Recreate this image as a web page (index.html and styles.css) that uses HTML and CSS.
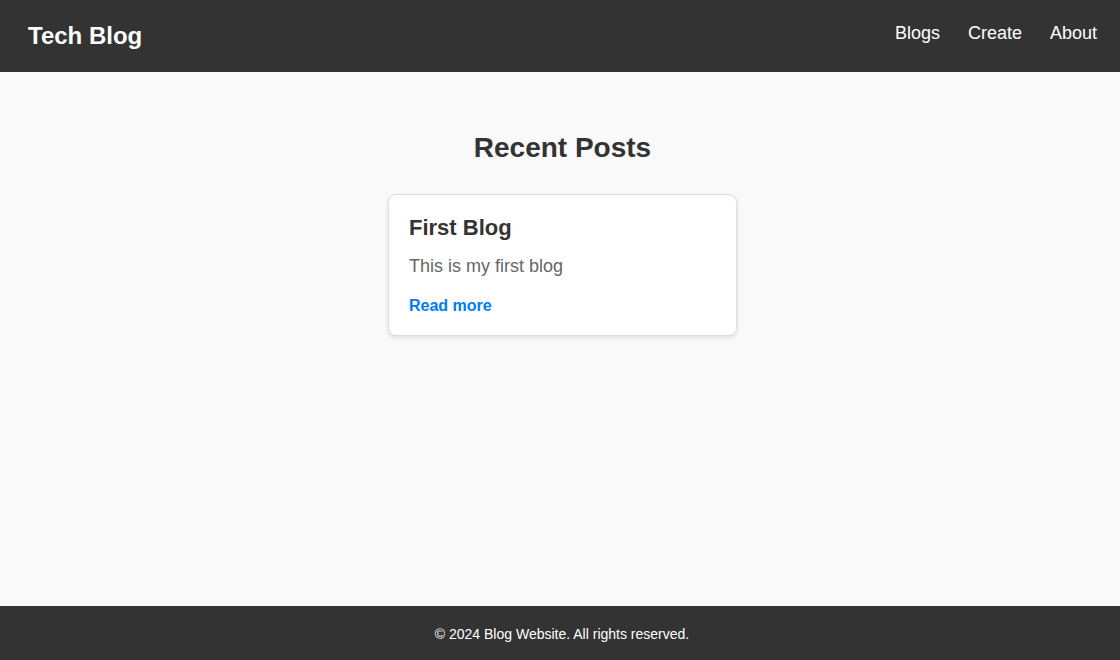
FILE: index.html
```html
<!DOCTYPE html>
<html lang="en">
<head>
<meta charset="utf-8">
<title>Tech Blog</title>
<link rel="stylesheet" href="styles.css">
</head>
<body>
  <header class="navbar">
    <h1 class="brand">Tech Blog</h1>
    <nav class="nav-links">
      <a href="#" class="nav-link">Blogs</a>
      <a href="#" class="nav-link">Create</a>
      <a href="#" class="nav-link">About</a>
    </nav>
  </header>
  <main class="content">
    <h2 class="page-title">Recent Posts</h2>
    <div class="post-list">
      <article class="post-card">
        <h3 class="post-title">First Blog</h3>
        <p class="post-excerpt">This is my first blog</p>
        <a href="#" class="read-more">Read more</a>
      </article>
    </div>
  </main>
  <footer class="footer">
    <p class="footer-text">© 2024 Blog Website. All rights reserved.</p>
  </footer>
</body>
</html>
```
FILE: styles.css
```css
* { box-sizing: border-box; }
html, body { margin: 0; padding: 0; }
body {
  font-family: "Liberation Sans", Arial, sans-serif;
  background: #f9f9f9;
  color: #333;
  min-height: 100vh;
  display: flex;
  flex-direction: column;
}
.navbar {
  height: 72px;
  background: #333;
  display: flex;
  align-items: center;
  justify-content: space-between;
  padding: 0 23px 0 28px;
}
.brand {
  margin: 0;
  font-size: 24px;
  font-weight: bold;
  color: #fff;
}
.nav-links {
  display: flex;
  gap: 28px;
  padding-bottom: 6px;
}
.nav-link {
  color: #fff;
  text-decoration: none;
  font-size: 18px;
}
.content {
  flex: 1;
  padding: 60px 0 0 5px;
  display: flex;
  flex-direction: column;
  align-items: center;
}
.page-title {
  margin: 0 0 30px;
  font-size: 28px;
  font-weight: bold;
  color: #333;
}
.post-list {
  display: flex;
  justify-content: center;
}
.post-card {
  width: 349px;
  background: #fff;
  border: 1px solid #ddd;
  border-radius: 8px;
  box-shadow: 0 2px 4px rgba(0,0,0,0.1);
  padding: 20px;
  display: flex;
  flex-direction: column;
  align-items: flex-start;
}
.post-title {
  margin: 0 0 15px;
  font-size: 22px;
  font-weight: bold;
  color: #333;
}
.post-excerpt {
  margin: 0 0 20px;
  font-size: 18px;
  color: #666;
}
.read-more {
  font-size: 16px;
  font-weight: bold;
  color: #007bff;
  text-decoration: none;
}
.footer {
  height: 54px;
  background: #333;
  padding: 20px 0 0 4px;
  text-align: center;
}
.footer-text {
  margin: 0;
  font-size: 14px;
  color: #fff;
}
```
